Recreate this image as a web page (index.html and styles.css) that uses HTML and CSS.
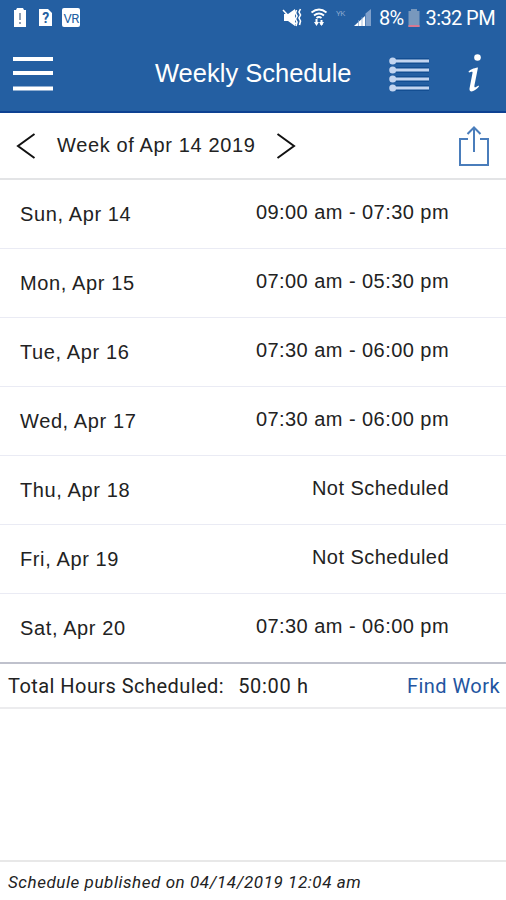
FILE: index.html
```
<!DOCTYPE html>
<html lang="en">
<head>
  <meta charset="utf-8">
  <title>Weekly Schedule</title>
  <link rel="stylesheet" href="styles.css">
</head>
<body>
  <header class="header">
    <div class="status-bar">
      <svg class="status-left" width="80" height="36" viewBox="0 0 80 36">
        <!-- battery warning -->
        <path d="M17 8h6l1 2h2v17H14V10h2z" fill="#fff"/>
        <path d="M20 13v7M20 22v2" stroke="#8f9fb4" stroke-width="2"/>
        <!-- unknown sim -->
        <path d="M39 9h9l4 4v13H39z" fill="#fff"/>
        <text class="sim-mark" x="45.500" y="23">?</text>
        <rect x="62" y="8" width="18" height="19" rx="2" fill="#fff"/>
        <text class="vr-mark" x="71" y="22.500">VR</text>
      </svg>
      <svg class="status-right" width="92" height="36" viewBox="284 0 92 36">
        <!-- muted -->
        <path d="M286 14h4l7-5v17l-7-5h-4z" fill="#fff"/>
        <path d="M285 10l13 14" stroke="#fff" stroke-width="1.500"/>
        <path d="M298.500 10l-1 3 1.500 3-1.500 3 1.500 3-1 4M302.500 9l-1.500 3 1.500 3-1.500 3 1.500 3-1 4" fill="none" stroke="#fff" stroke-width="1.600"/>
        <!-- wifi -->
        <path d="M313.500 12.500q7.500-6 15 0M316 15.500q5-4 10 0M318.500 18q2.500-2 5 0" fill="none" stroke="#fff" stroke-width="1.900"/>
        <path d="M318.500 19v5M323.500 20v5" stroke="#fff" stroke-width="2"/>
        <path d="M316 22h5l-2.500 4zM321 22h5l-2.500 4z" fill="#fff"/>
        <text class="network-mark" x="338" y="16">YK</text>
        <!-- signal -->
        <path d="M356 26l11-10v10z" fill="#fff"/>
        <path d="M367.500 13.500l5.500-4.500v17h-5.500z" fill="#7fa0cb"/>
        <path d="M360.500 20v6M364 17v9" stroke="#7fa0cb" stroke-width=".7"/>
      </svg>
      <span class="battery-level">8%</span>
      <svg class="battery" width="12" height="19" viewBox="0 0 12 19">
        <path d="M3 0h6v2h2.500v16H.5V2H3z" fill="#7898bd"/>
        <path d="M.5 16h11v2H.5z" fill="#d77891"/>
      </svg>
      <span class="clock">3:32 PM</span>
    </div>
    <div class="title-bar">
      <svg class="menu-icon" width="40" height="36" viewBox="0 0 40 36">
        <path d="M0 3h40M0 17h40M0 32.500h40" stroke="#fff" stroke-width="4"/>
      </svg>
      <h1 class="title">Weekly Schedule</h1>
      <svg class="list-icon" width="41" height="36" viewBox="0 0 41 36">
        <path d="M7 5h33M7 14h33M7 23h33M7 32h33" stroke="#134e92" stroke-width="6"/>
        <path d="M7 5h33M7 14h33M7 23h33M7 32h33" stroke="#c3d5f0" stroke-width="3"/>
        <g fill="#c3d5f0">
          <circle cx="3.700" cy="5" r="3.500"/>
          <circle cx="3.700" cy="14" r="3.500"/>
          <circle cx="3.700" cy="23" r="3.500"/>
          <circle cx="3.700" cy="32" r="3.500"/>
        </g>
      </svg>
      <svg class="info-icon" width="16" height="40" viewBox="0 0 16 40">
        <circle cx="11.500" cy="3.500" r="3.300" fill="#fff"/>
        <path d="M2.500 17.500C5 15 7 14.500 12 13.500L8.500 31c-.5 3 .5 3 4 .5l.5 1c-4 5-10 7-9.500 2L6.500 19c.3-2-.8-1.500-3.500-.5z" fill="#fff"/>
      </svg>
    </div>
  </header>

  <div class="week-bar">
    <svg class="arrow" width="20" height="28" viewBox="0 0 20 28">
      <path d="M18.500 2L2 14l16.500 12" fill="none" stroke="#111" stroke-width="2"/>
    </svg>
    <span class="week">Week of Apr 14 2019</span>
    <svg class="arrow" width="20" height="28" viewBox="0 0 20 28">
      <path d="M1.500 2L18 14 1.500 26" fill="none" stroke="#111" stroke-width="2"/>
    </svg>
    <svg class="share-icon" width="32" height="42" viewBox="0 0 32 42">
      <path d="M10 14H2v26h28V14h-8M16 27V3M9.500 9L16 2.500 22.500 9" fill="none" stroke="#4a7dbb" stroke-width="2"/>
    </svg>
  </div>

  <ul class="schedule">
    <li><span class="day">Sun, Apr 14</span><span class="time">09:00 am - 07:30 pm</span></li>
    <li><span class="day">Mon, Apr 15</span><span class="time">07:00 am - 05:30 pm</span></li>
    <li><span class="day">Tue, Apr 16</span><span class="time">07:30 am - 06:00 pm</span></li>
    <li><span class="day">Wed, Apr 17</span><span class="time">07:30 am - 06:00 pm</span></li>
    <li><span class="day">Thu, Apr 18</span><span class="time">Not Scheduled</span></li>
    <li><span class="day">Fri, Apr 19</span><span class="time">Not Scheduled</span></li>
    <li><span class="day">Sat, Apr 20</span><span class="time">07:30 am - 06:00 pm</span></li>
  </ul>

  <div class="total">
    <span class="total-label">Total Hours Scheduled:</span>
    <span class="total-hours">50:00 h</span>
    <a class="find-work">Find Work</a>
  </div>

  <footer class="footer">Schedule published on 04/14/2019 12:04 am</footer>
</body>
</html>
```
FILE: styles.css
```
* {
  box-sizing: border-box;
}

body {
  margin: 0;
  height: 900px;
  display: flex;
  flex-direction: column;
  background-color: #fff;
  color: #222;
  font-family: "Liberation Sans", Arial, sans-serif;
  font-size: 20px;
  letter-spacing: 0.45px;
  overflow: hidden;
}

svg {
  display: block;
  flex: none;
}

.header {
  height: 113px;
  background-color: #245fa2;
  border-bottom: 2px solid #0d4192;
  color: #fff;
}

.status-bar {
  display: flex;
  align-items: center;
  height: 36px;
  padding-right: 11px;
  font-family: Roboto, sans-serif;
  font-size: 20px;
  letter-spacing: -0.6px;
}

.status-right {
  margin-left: auto;
}

.sim-mark,
.vr-mark {
  font-family: Roboto, sans-serif;
  font-weight: bold;
  text-anchor: middle;
  fill: #245fa2;
}

.sim-mark {
  font-size: 14px;
}

.vr-mark {
  font-size: 13px;
  font-weight: normal;
}

.network-mark {
  font-size: 8px;
  fill: #86a6cd;
}

.battery-level {
  margin-left: 5px;
}

.battery {
  margin: 0 6px 0 4px;
}

.title-bar {
  display: flex;
  align-items: center;
  height: 75px;
  padding: 0 24px 0 13px;
}

.title {
  margin: 0 0 0 102px;
  width: 197px;
  font-size: 25.5px;
  font-weight: normal;
  letter-spacing: 0;
  white-space: nowrap;
}

.list-icon {
  margin-left: 37px;
}

.info-icon {
  margin-left: auto;
}

.week-bar {
  display: flex;
  align-items: center;
  height: 67px;
  padding: 0 16px;
  border-bottom: 2px solid #e3e4e6;
}

.week {
  width: 199px;
  margin: 0 20px 0 21px;
  letter-spacing: 0.63px;
  white-space: nowrap;
}

.share-icon {
  margin-left: auto;
}

.schedule {
  margin: 0;
  padding: 0;
  list-style: none;
  border-bottom: 2px solid #bfc1cc;
}

.schedule li {
  display: flex;
  justify-content: space-between;
  align-items: center;
  height: 69px;
  padding: 0 57px 0 20px;
  border-bottom: 1px solid #eaebf4;
}

.schedule li:last-child {
  height: 68px;
  border-bottom: none;
}

.day {
  letter-spacing: 0.62px;
}

.time {
  padding-bottom: 4px;
}

.total {
  display: flex;
  align-items: center;
  height: 45px;
  padding: 0 6px 0 8px;
  border-bottom: 2px solid #ececee;
  font-family: Roboto, sans-serif;
}

.total-hours {
  margin-left: 14px;
  letter-spacing: 0.7px;
}

.find-work {
  margin-left: auto;
  color: #2355a0;
}

.footer {
  height: 40px;
  margin-top: auto;
  padding: 0 8px;
  border-top: 2px solid #e8e8e8;
  font-family: Roboto, sans-serif;
  font-size: 17px;
  font-style: italic;
  letter-spacing: 0.56px;
  line-height: 40px;
}
```
